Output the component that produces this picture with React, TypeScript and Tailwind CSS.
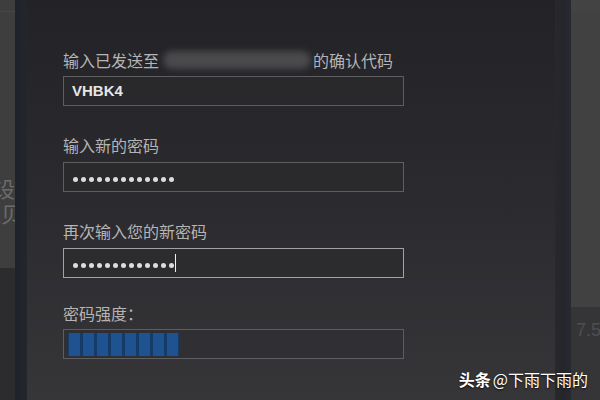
import React from "react";

const cjk = { fontFamily: '"Noto Sans CJK SC", "Noto Sans", sans-serif' };

function Dots({ count }: { count: number }) {
  return (
    <div className="flex items-center gap-[3px] pt-[4px]">
      {Array.from({ length: count }).map((_, i) => (
        <span key={i} className="h-[5px] w-[5px] rounded-full bg-[#dcdcdc]" />
      ))}
    </div>
  );
}

function App() {
  return (
    <div className="relative flex h-[400px] w-[600px] overflow-hidden bg-[#2d2d2f]" style={cjk}>
      {/* page behind the dialog, left */}
      <div className="flex w-[15px] flex-col">
        <div className="flex h-[268px] flex-col overflow-hidden bg-[#3e3e3f]">
          <div className="h-[12px] border-b border-[#474748]" />
          <div className="mt-[164px] flex justify-end whitespace-nowrap text-[21px] leading-[25px] text-[#6c6c6c]">设</div>
          <div className="flex justify-end whitespace-nowrap text-[21px] leading-[25px] text-[#6c6c6c]">
            <span className="-mr-[7px]">入贝</span>
          </div>
        </div>
        <div className="flex-1 bg-[#2c2c2e]" />
      </div>

      {/* dialog */}
      <div className="flex w-[556px]">
        <div className="w-[12px] bg-gradient-to-r from-[#1f222a] to-[#24262c]" />
        <div className="flex flex-1 flex-col bg-gradient-to-b from-[#232226] via-[#2b2a2e] to-[#363538] pl-[36px] pt-[50px]">
          <div className="flex items-center text-[16px] leading-5 text-[#b5b5b5]">
            <span>输入已发送至</span>
            <span className="ml-[4px] mr-[2px] h-[18px] w-[148px] rounded-full bg-[#4a494c] blur-[3px]" />
            <span>的确认代码</span>
          </div>
          <div className="mt-[6px] flex h-[30px] w-[341px] items-center border border-[#5e5d60] bg-[#29282b] pl-[8px]">
            <span className="text-[15px] font-bold text-[#e6e6e6]" style={{ fontFamily: '"Liberation Sans", Arial, sans-serif' }}>
              VHBK4
            </span>
          </div>

          <div className="mt-[29px] text-[16px] leading-5 text-[#b5b5b5]">输入新的密码</div>
          <div className="mt-[7px] flex h-[30px] w-[341px] items-center border border-[#5e5d60] bg-[#2a292c] pl-[9px]">
            <Dots count={13} />
          </div>

          <div className="mt-[29px] text-[16px] leading-5 text-[#b5b5b5]">再次输入您的新密码</div>
          <div className="mt-[7px] flex h-[30px] w-[341px] items-center border border-[#a3a3a5] bg-[#2c2b2e] pl-[9px]">
            <Dots count={13} />
            <span className="ml-[1px] h-[18px] w-[1px] bg-[#f0f0f0]" />
          </div>

          <div className="mt-[25px] text-[16px] leading-5 text-[#b5b5b5]">密码强度：</div>
          <div className="mt-[6px] flex h-[30px] w-[341px] items-center border border-[#5e5d60] bg-[#302f33] pl-[4px]">
            <div className="flex h-[23px] gap-[3px] bg-[#163b66] px-[1px]">
              {Array.from({ length: 8 }).map((_, i) => (
                <span key={i} className="h-full w-[11px] bg-[#1e5291]" />
              ))}
            </div>
          </div>
        </div>
        <div className="w-[16px] bg-gradient-to-r from-[#29282c] via-[#24262b] to-[#262a31]" />
      </div>

      {/* page behind the dialog, right */}
      <div className="flex w-[29px] flex-col">
        <div className="h-[307px] border-t-[12px] border-[#434344] bg-[#414142]" />
        <div className="flex-1 overflow-hidden bg-[#353537] pl-[5px] pt-[10px]">
          <span className="whitespace-nowrap text-[18px] text-[#4e4e50]" style={{ fontFamily: '"Liberation Sans", Arial, sans-serif' }}>
            7.59
          </span>
        </div>
      </div>

      {/* watermark */}
      <div className="absolute bottom-[11px] right-[12px] flex items-center gap-[2px] text-[16px] leading-5 text-white [text-shadow:0_1px_2px_rgba(0,0,0,0.8)]">
        <span className="font-bold">头条</span>
        <span>@下雨下雨的</span>
      </div>
    </div>
  );
}

export default App;
